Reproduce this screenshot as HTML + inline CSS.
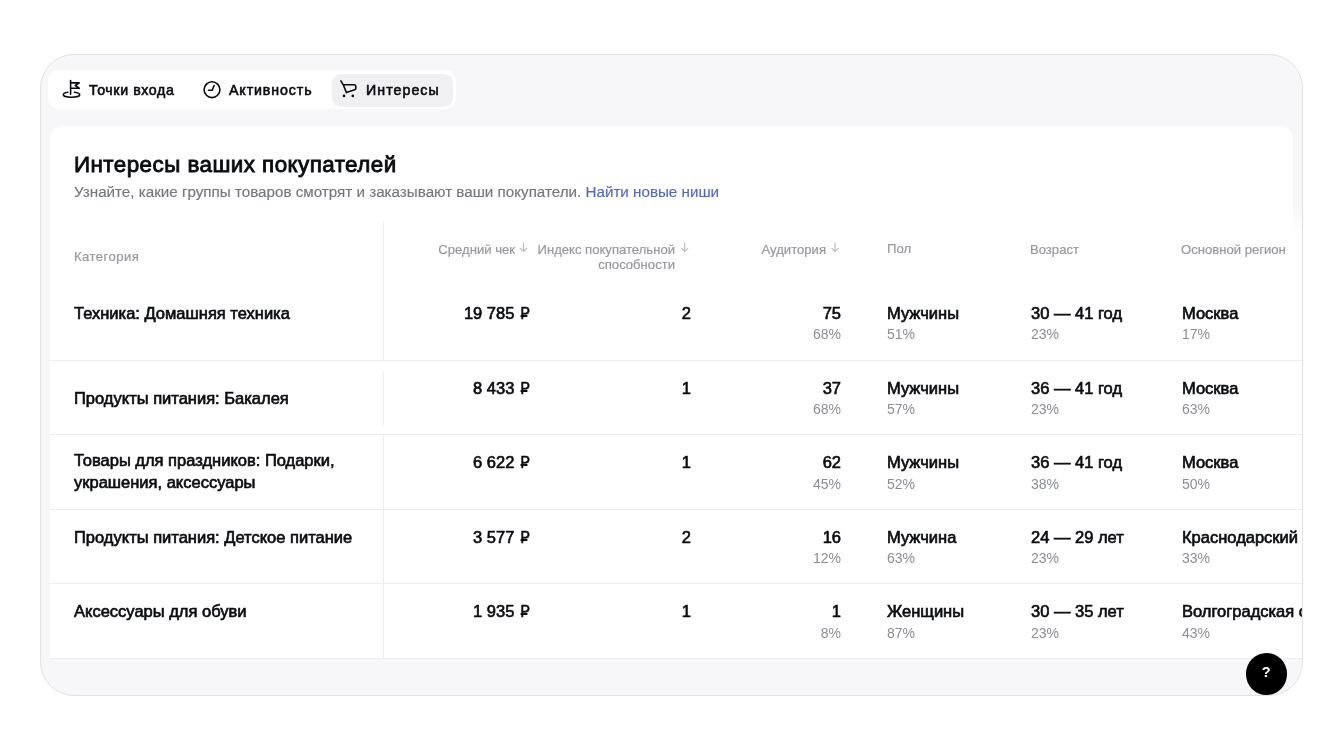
<!DOCTYPE html>
<html><head><meta charset="utf-8">
<style>
*{box-sizing:border-box;margin:0;padding:0}
html,body{width:1344px;height:750px;background:#fff;overflow:hidden;font-family:"Liberation Sans",sans-serif;color:#0a0c10}
.outer{position:absolute;left:40px;top:54px;width:1263px;height:641.5px;border-radius:34px;background:#f7f7f9;overflow:hidden}
.border{position:absolute;left:40px;top:54px;width:1263px;height:641.5px;border-radius:34px;border:1.5px solid #e2e2e5}
.tabs{position:absolute;left:8px;top:16px;width:408px;height:39px;background:#fff;border-radius:11px}
.atab{position:absolute;left:292px;top:19.5px;width:121px;height:33px;background:#f0f0f3;border-radius:9px}
.card{position:absolute;left:10px;top:72px;width:1243px;height:200px;background:#fff;border-radius:12px}
.table{position:absolute;left:10px;top:168px;width:1300px;height:436px;background:#fff}
.t{position:absolute;white-space:nowrap;will-change:transform}
.bold{font-weight:400;-webkit-text-stroke:0.65px #0a0c10}
.tabt{-webkit-text-stroke:0.6px #0a0c10}
.title{-webkit-text-stroke:0.85px #0a0c10}
.sub{color:#73767e;-webkit-text-stroke:0.15px #73767e}
.link{color:#4f68c8;-webkit-text-stroke:0.15px #4f68c8}
.th{color:#96989e;-webkit-text-stroke:0.2px #96989e}
.arr{color:#b5b7bc;font-size:0.95em}
.sec{color:#8b8e95}
.rub{position:relative;display:inline-block;transform:scaleX(0.86);transform-origin:100% 50%}
.rub:after{content:"";position:absolute;left:-0.3px;width:0.5em;top:0.75em;height:0.1em;background:currentColor}
.hl{position:absolute;left:10px;width:1300px;height:1px;background:#ededf0}
.vl{position:absolute;left:343px;width:1px;background:#ededf0}
.icon{position:absolute;overflow:visible}
.help{position:absolute;left:1245.5px;top:653px;width:41.5px;height:41.5px;border-radius:50%;background:#000}
.help span{position:absolute;left:0;width:41.5px;top:11px;text-align:center;color:#fff;font-size:14.5px;font-weight:700;line-height:17px}
</style></head><body>
<div class="outer">
  <div class="tabs"></div>
  <div class="atab"></div>
  <div class="card"></div>
  <div class="table"></div>
  <div style="position:absolute;left:1253px;top:150px;width:20px;height:30px;background:linear-gradient(#f7f7f9,#fff)"></div>
<div class="hl" style="top:305.50px"></div>
<div class="hl" style="top:380.10px"></div>
<div class="hl" style="top:454.50px"></div>
<div class="hl" style="top:529.00px"></div>
<div class="hl" style="top:603.70px"></div>
<div class="vl" style="top:168px;height:138px"></div>
<div class="vl" style="top:316.5px;height:54.5px"></div>
<div class="vl" style="top:380.6px;height:223.60000000000002px"></div>
<div class="t tabt" style="left:48.50px;top:26.98px;font-size:14.2px;line-height:18px;letter-spacing:0.6px">Точки входа</div>
<div class="t tabt" style="left:189.00px;top:26.98px;font-size:14.2px;line-height:18px;letter-spacing:0.9px">Активность</div>
<div class="t tabt" style="left:326.00px;top:26.98px;font-size:14.2px;line-height:18px;letter-spacing:1.05px">Интересы</div>
<div class="t title" style="left:33.50px;top:95.74px;font-size:22.4px;line-height:29px;letter-spacing:0.45px">Интересы ваших покупателей</div>
<div class="t sub" style="left:34.00px;top:128.13px;font-size:15.2px;line-height:20px;">Узнайте, какие группы товаров смотрят и заказывают ваши покупатели. <span class="link">Найти новые ниши</span></div>
<div class="t th" style="left:34.00px;top:194.26px;font-size:13.1px;line-height:17px;letter-spacing:0.45px">Категория</div>
<div class="t th" style="left:-225.50px;width:700px;text-align:right;top:186.76px;font-size:13.1px;line-height:17px;">Средний чек</div>
<div class="t th" style="left:-65.30px;width:700px;text-align:right;top:186.76px;font-size:13.1px;line-height:17px;">Индекс покупательной</div>
<div class="t th" style="left:-65.30px;width:700px;text-align:right;top:201.56px;font-size:13.1px;line-height:17px;">способности</div>
<div class="t th" style="left:85.70px;width:700px;text-align:right;top:186.76px;font-size:13.1px;line-height:17px;">Аудитория</div>
<div class="t th" style="left:846.60px;top:186.06px;font-size:13.1px;line-height:17px;">Пол</div>
<div class="t th" style="left:990.20px;top:186.76px;font-size:13.1px;line-height:17px;">Возраст</div>
<div class="t th" style="left:1141.00px;top:186.76px;font-size:13.1px;line-height:17px;">Основной регион</div>
<div class="t bold" style="left:34.00px;top:248.68px;font-size:16.5px;line-height:21px;">Техника: Домашняя техника</div>
<div class="t bold" style="left:-210.00px;width:700px;text-align:right;top:248.68px;font-size:16.5px;line-height:21px;">19 785 <span class="rub">Р</span></div>
<div class="t bold" style="left:-49.50px;width:700px;text-align:right;top:248.68px;font-size:16.5px;line-height:21px;">2</div>
<div class="t bold" style="left:101.00px;width:700px;text-align:right;top:248.68px;font-size:16.5px;line-height:21px;">75</div>
<div class="t sec" style="left:101.00px;width:700px;text-align:right;top:271.05px;font-size:14px;line-height:18px;">68%</div>
<div class="t bold" style="left:847.00px;top:248.68px;font-size:16.5px;line-height:21px;">Мужчины</div>
<div class="t sec" style="left:847.00px;top:271.05px;font-size:14px;line-height:18px;">51%</div>
<div class="t bold" style="left:990.50px;top:248.68px;font-size:16.5px;line-height:21px;">30 — 41 год</div>
<div class="t sec" style="left:990.50px;top:271.05px;font-size:14px;line-height:18px;">23%</div>
<div class="t bold" style="left:1141.50px;top:248.68px;font-size:16.5px;line-height:21px;">Москва</div>
<div class="t sec" style="left:1141.50px;top:271.05px;font-size:14px;line-height:18px;">17%</div>
<div class="t bold" style="left:34.00px;top:333.88px;font-size:16.5px;line-height:21px;">Продукты питания: Бакалея</div>
<div class="t bold" style="left:-210.00px;width:700px;text-align:right;top:323.68px;font-size:16.5px;line-height:21px;">8 433 <span class="rub">Р</span></div>
<div class="t bold" style="left:-49.50px;width:700px;text-align:right;top:323.68px;font-size:16.5px;line-height:21px;">1</div>
<div class="t bold" style="left:101.00px;width:700px;text-align:right;top:323.68px;font-size:16.5px;line-height:21px;">37</div>
<div class="t sec" style="left:101.00px;width:700px;text-align:right;top:346.05px;font-size:14px;line-height:18px;">68%</div>
<div class="t bold" style="left:847.00px;top:323.68px;font-size:16.5px;line-height:21px;">Мужчины</div>
<div class="t sec" style="left:847.00px;top:346.05px;font-size:14px;line-height:18px;">57%</div>
<div class="t bold" style="left:990.50px;top:323.68px;font-size:16.5px;line-height:21px;">36 — 41 год</div>
<div class="t sec" style="left:990.50px;top:346.05px;font-size:14px;line-height:18px;">23%</div>
<div class="t bold" style="left:1141.50px;top:323.68px;font-size:16.5px;line-height:21px;">Москва</div>
<div class="t sec" style="left:1141.50px;top:346.05px;font-size:14px;line-height:18px;">63%</div>
<div class="t bold" style="left:34.00px;top:396.08px;font-size:16.5px;line-height:21px;">Товары для праздников: Подарки,</div>
<div class="t bold" style="left:34.00px;top:418.28px;font-size:16.5px;line-height:21px;">украшения, аксессуары</div>
<div class="t bold" style="left:-210.00px;width:700px;text-align:right;top:398.28px;font-size:16.5px;line-height:21px;">6 622 <span class="rub">Р</span></div>
<div class="t bold" style="left:-49.50px;width:700px;text-align:right;top:398.28px;font-size:16.5px;line-height:21px;">1</div>
<div class="t bold" style="left:101.00px;width:700px;text-align:right;top:398.28px;font-size:16.5px;line-height:21px;">62</div>
<div class="t sec" style="left:101.00px;width:700px;text-align:right;top:420.65px;font-size:14px;line-height:18px;">45%</div>
<div class="t bold" style="left:847.00px;top:398.28px;font-size:16.5px;line-height:21px;">Мужчины</div>
<div class="t sec" style="left:847.00px;top:420.65px;font-size:14px;line-height:18px;">52%</div>
<div class="t bold" style="left:990.50px;top:398.28px;font-size:16.5px;line-height:21px;">36 — 41 год</div>
<div class="t sec" style="left:990.50px;top:420.65px;font-size:14px;line-height:18px;">38%</div>
<div class="t bold" style="left:1141.50px;top:398.28px;font-size:16.5px;line-height:21px;">Москва</div>
<div class="t sec" style="left:1141.50px;top:420.65px;font-size:14px;line-height:18px;">50%</div>
<div class="t bold" style="left:34.00px;top:472.68px;font-size:16.5px;line-height:21px;">Продукты питания: Детское питание</div>
<div class="t bold" style="left:-210.00px;width:700px;text-align:right;top:472.68px;font-size:16.5px;line-height:21px;">3 577 <span class="rub">Р</span></div>
<div class="t bold" style="left:-49.50px;width:700px;text-align:right;top:472.68px;font-size:16.5px;line-height:21px;">2</div>
<div class="t bold" style="left:101.00px;width:700px;text-align:right;top:472.68px;font-size:16.5px;line-height:21px;">16</div>
<div class="t sec" style="left:101.00px;width:700px;text-align:right;top:495.05px;font-size:14px;line-height:18px;">12%</div>
<div class="t bold" style="left:847.00px;top:472.68px;font-size:16.5px;line-height:21px;">Мужчина</div>
<div class="t sec" style="left:847.00px;top:495.05px;font-size:14px;line-height:18px;">63%</div>
<div class="t bold" style="left:990.50px;top:472.68px;font-size:16.5px;line-height:21px;">24 — 29 лет</div>
<div class="t sec" style="left:990.50px;top:495.05px;font-size:14px;line-height:18px;">23%</div>
<div class="t bold" style="left:1141.50px;top:472.68px;font-size:16.5px;line-height:21px;">Краснодарский край</div>
<div class="t sec" style="left:1141.50px;top:495.05px;font-size:14px;line-height:18px;">33%</div>
<div class="t bold" style="left:34.00px;top:547.18px;font-size:16.5px;line-height:21px;">Аксессуары для обуви</div>
<div class="t bold" style="left:-210.00px;width:700px;text-align:right;top:547.18px;font-size:16.5px;line-height:21px;">1 935 <span class="rub">Р</span></div>
<div class="t bold" style="left:-49.50px;width:700px;text-align:right;top:547.18px;font-size:16.5px;line-height:21px;">1</div>
<div class="t bold" style="left:101.00px;width:700px;text-align:right;top:547.18px;font-size:16.5px;line-height:21px;">1</div>
<div class="t sec" style="left:101.00px;width:700px;text-align:right;top:569.55px;font-size:14px;line-height:18px;">8%</div>
<div class="t bold" style="left:847.00px;top:547.18px;font-size:16.5px;line-height:21px;">Женщины</div>
<div class="t sec" style="left:847.00px;top:569.55px;font-size:14px;line-height:18px;">87%</div>
<div class="t bold" style="left:990.50px;top:547.18px;font-size:16.5px;line-height:21px;">30 — 35 лет</div>
<div class="t sec" style="left:990.50px;top:569.55px;font-size:14px;line-height:18px;">23%</div>
<div class="t bold" style="left:1141.50px;top:547.18px;font-size:16.5px;line-height:21px;">Волгоградская область</div>
<div class="t sec" style="left:1141.50px;top:569.55px;font-size:14px;line-height:18px;">43%</div>
</div>
<div class="border"></div>
<svg class="icon" style="left:0;top:0" width="1344" height="750" viewBox="0 0 1344 750" fill="none" stroke="#0a0c10" stroke-width="1.6" stroke-linecap="round" stroke-linejoin="round">
  <!-- flag -->
  <path d="M70.6 80.5V94.2M70.6 82.9H79.2L75.3 85.5L79.2 88.2H70.6"/>
  <path d="M67.8 92.3C65 92.7 63.3 93.6 63.3 94.7C63.3 96.1 67 97.2 71.5 97.2C76 97.2 79.7 96.1 79.7 94.7C79.7 93.6 77.8 92.7 74.4 92.3"/>
  <!-- clock -->
  <circle cx="212" cy="89.7" r="7.9"/>
  <path d="M208.5 90.2H212.2L214.1 85.5"/>
  <!-- cart -->
  <path d="M340.9 80.9L343.3 84.8L346.4 92.6L354.6 89.8Q355.8 89.4 355.8 88.2V86.2Q355.8 84.8 354.4 84.8H343.3"/>
  <circle cx="344" cy="95.9" r="1.3" fill="#0a0c10" stroke="none"/>
  <circle cx="352.8" cy="95.9" r="1.3" fill="#0a0c10" stroke="none"/>
</svg>
<svg class="icon" style="left:0;top:0" width="1344" height="750" viewBox="0 0 1344 750" fill="none" stroke="#bcbec3" stroke-width="1.15" stroke-linecap="round" stroke-linejoin="round">
<path d="M523.6 242.9V251.5M520.4 248.3L523.6 251.5L526.8 248.3"/>
<path d="M684.6 242.9V251.5M681.4 248.3L684.6 251.5L687.8 248.3"/>
<path d="M835.0 242.9V251.5M831.8 248.3L835.0 251.5L838.2 248.3"/>
</svg>
<div class="help"><span>?</span></div>
</body></html>
